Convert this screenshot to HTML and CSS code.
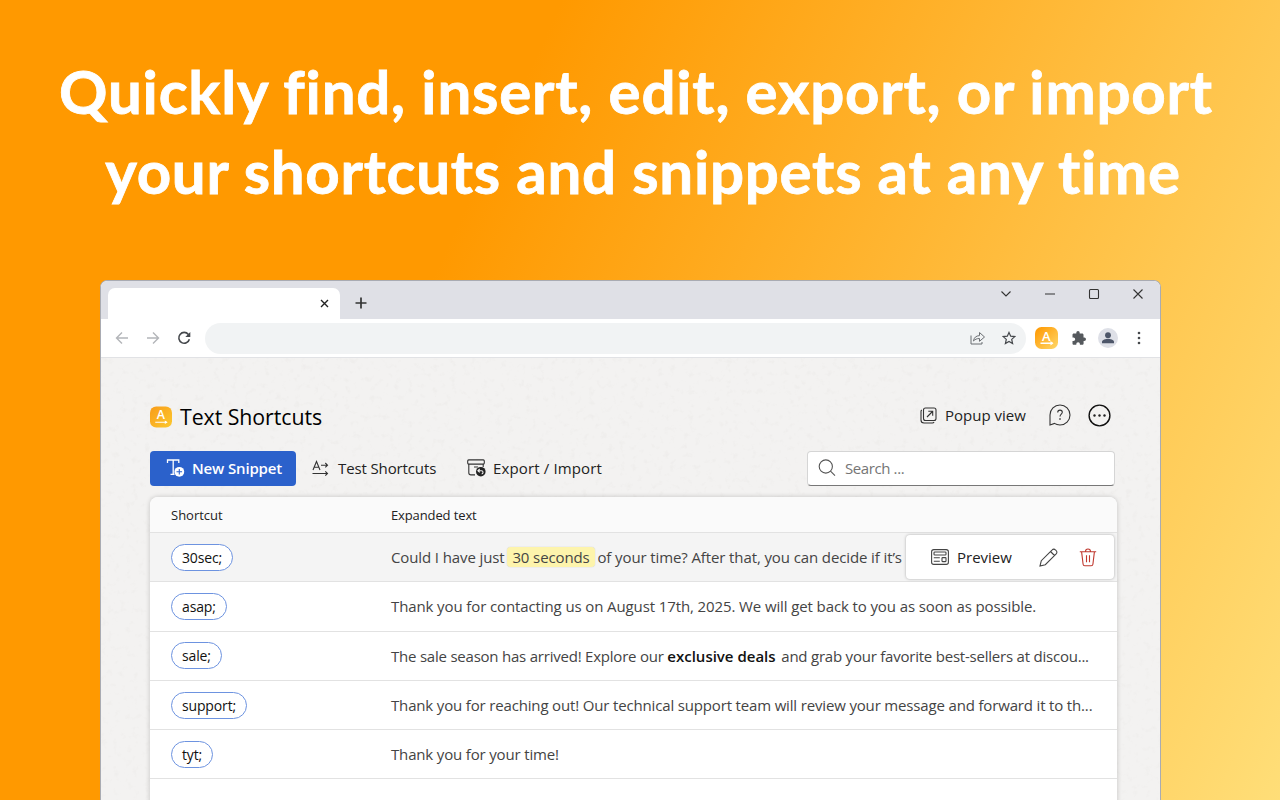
FILE: index.html
```
<!DOCTYPE html>
<html lang="en">
<head>
<meta charset="utf-8">
<title>Text Shortcuts</title>
<link rel="stylesheet" href="styles.css">
</head>
<body>

    <h1 class="headline">
        <span class="line1">Quickly find, insert, edit, export, or import</span>
        <span class="line2">your shortcuts and snippets at any time</span>
    </h1>

    <div class="window">

        <!-- tabs -->
        <div class="tabstrip">
            <div class="tab">
                <svg width="9" height="9" viewBox="0 0 9 9" stroke="#222" stroke-width="1.4"><path d="M1 1l7 7M8 1l-7 7"/></svg>
            </div>
            <svg class="newtab" width="12" height="12" viewBox="0 0 12 12" stroke="#333" stroke-width="1.7"><path d="M6 .5v11M.5 6h11"/></svg>
            <div class="controls">
                <svg width="12" height="12" viewBox="0 0 12 12"><path d="M1.5 3.5l4.5 4.5 4.5-4.5"/></svg>
                <svg width="12" height="12" viewBox="0 0 12 12"><path d="M1 6h10"/></svg>
                <svg width="12" height="12" viewBox="0 0 12 12"><rect x="1.5" y="1.5" width="9" height="9" rx="1"/></svg>
                <svg width="12" height="12" viewBox="0 0 12 12"><path d="M1.5 1.5l9 9M10.5 1.5l-9 9"/></svg>
            </div>
        </div>

        <div class="navbar">
            <svg class="nav-dim" width="14" height="14" viewBox="0 0 14 14"><path d="M13 7H1.5M7 1.5L1.5 7 7 12.500"/></svg>
            <svg class="nav-dim" width="14" height="14" viewBox="0 0 14 14"><path d="M1 7h11.500M7 1.500L12.500 7 7 12.500"/></svg>
            <svg class="reload" width="14" height="14" viewBox="0 0 14 14"><path d="M11.400 3.400A5.400 5.400 0 1 0 12.400 8.300"/><path d="M13.300.9v5H8.300z" class="fill"/></svg>
            <div class="address">
                <svg class="share" width="16" height="14" viewBox="0 0 16 14"><path d="M1 4.500V13h11v-2M3.500 10C4 6.500 6 4.800 9.500 4.600V1.500l5 4.500-5 4.300V7.500C6.800 7.500 5 8.300 3.500 10z"/></svg>
                <svg class="star" width="14" height="14" viewBox="0 0 14 14"><path d="M7 1.400l1.700 3.800 4.100.4-3.100 2.800.9 4.100L7 10.400l-3.600 2.100.9-4.100L1.200 5.600l4.100-.4z"/></svg>
            </div>
            <svg class="ext" width="23" height="22" viewBox="0 0 23 22">
                <defs><linearGradient id="lg" x1="0" y1="0" x2="1" y2="1"><stop offset=".1" stop-color="#ff9d08"/><stop offset="1" stop-color="#ffd86a"/></linearGradient></defs>
                <rect width="23" height="22" rx="6.500" fill="url(#lg)"/>
                <text x="11.300" y="13.500" text-anchor="middle" class="logo-a">A</text>
                <path d="M5.500 16.300h12" stroke="#fff" stroke-width="1.400"/><path d="M15.500 14.100l3 2.200-3 2.200z" fill="#fff"/>
            </svg>
            <svg class="puzzle" width="14" height="14" viewBox="0 0 14 14"><path d="M12.300 6.500h-.8V3.900c0-.7-.6-1.300-1.300-1.300H7.700v-.8a1.700 1.700 0 0 0-3.400 0v.8H1.800C1 2.600.5 3.200.5 3.900v2.500h.9a1.800 1.800 0 0 1 0 3.600H.5v2.500c0 .7.500 1.300 1.300 1.300h2.500V13a1.800 1.800 0 0 1 3.600 0v.8h2.400c.7 0 1.300-.6 1.300-1.300V9.900h.7a1.700 1.700 0 0 0 0-3.400z"/></svg>
            <svg class="avatar" width="20" height="20" viewBox="0 0 20 20"><circle cx="10" cy="10" r="10" fill="#dee0e7"/><circle cx="10" cy="7.200" r="2.900"/><path d="M4 15.200v-1.500c0-2 4-3 6-3s6 1 6 3v1.500z"/></svg>
            <svg class="kebab" width="4" height="14" viewBox="0 0 4 14"><circle cx="2" cy="2" r="1.300"/><circle cx="2" cy="7" r="1.300"/><circle cx="2" cy="12" r="1.300"/></svg>
        </div>

        <div class="page">
            <!-- paper grain -->
            <svg class="paper" width="100%" height="100%">
                <filter id="grain" x="0" y="0" width="100%" height="100%">
                    <feTurbulence type="fractalNoise" baseFrequency=".16" numOctaves="3" seed="8"/>
                    <feColorMatrix values="0 0 0 0 .55  0 0 0 0 .52  0 0 0 0 .48  2.400 0 0 0 -1.350"/>
                </filter>
                <rect width="100%" height="100%" filter="url(#grain)"/>
            </svg>

            <div class="header">
                <svg class="logo" width="22" height="22" viewBox="0 0 23 22">
                    <defs><linearGradient id="lg2" x1="0" y1="0" x2="1" y2="1"><stop offset=".1" stop-color="#f9a01b"/><stop offset="1" stop-color="#fcc92f"/></linearGradient></defs>
                    <rect width="23" height="22" rx="6.500" fill="url(#lg2)"/>
                    <text x="11.300" y="13.500" text-anchor="middle" class="logo-a">A</text>
                    <path d="M5.500 16.500h12" stroke="#fff" stroke-width="1.200"/><path d="M15.500 14.600l3 1.900-3 1.900z" fill="#fff"/>
                </svg>
                <span class="title">Text Shortcuts</span>
                <div class="header-right">
                    <svg width="17" height="17" viewBox="0 0 17 17"><rect x="3.500" y="1" width="12.500" height="12.500" rx="2"/><path d="M1.800 3C1.200 3.400 1 4 1 4.600v8.400c0 2 1.200 3 3 3h8.400c.7 0 1.300-.3 1.700-.9M7 10l5.500-5.500M8.300 4.300h4.400v4.400"/></svg>
                    <span class="popup">Popup view</span>
                    <svg class="help" width="22" height="22" viewBox="0 0 22 22"><path d="M1 21V11A10 10 0 1 1 11 21c-2 0-4-.5-5.500-1.600z"/><path d="M8.700 8.500c0-1.500 1-2.400 2.300-2.400s2.300.9 2.300 2.200c0 1.700-2.300 2-2.300 4.200"/><path d="M11 14.300v1.400" stroke-width="1.500"/></svg>
                    <svg class="more" width="23" height="23" viewBox="0 0 23 23"><circle cx="11.500" cy="11.500" r="10.400"/><g fill="#222" stroke="none"><circle cx="6.500" cy="11.500" r="1.200"/><circle cx="11.500" cy="11.500" r="1.200"/><circle cx="16.500" cy="11.500" r="1.200"/></g></svg>
                </div>
            </div>

            <div class="toolbar">
                <button class="btn-new">
                    <svg width="20" height="20" viewBox="0 0 20 20"><path d="M1.500 5V2h11.300v3M7.200 2v14M4.500 16.300h4" fill="none" stroke="#fff" stroke-width="1.300"/><circle cx="13.300" cy="13.800" r="4.900" fill="#fff"/><path d="M13.300 11v5.600M10.500 13.800h5.600" stroke="#2b61cb" stroke-width="1.100"/></svg>
                    <span>New Snippet</span>
                </button>
                <div class="tool test">
                    <svg width="17" height="17" viewBox="0 0 17 17"><path d="M1 10L4.500 1.500 8 10M2.200 7.200h4.600M9 5.200h6.500M13.300 3l2.200 2.200-2.200 2.200M.5 13.500h15M13.300 11.300l2.200 2.200-2.200 2.200"/></svg>
                    <span>Test Shortcuts</span>
                </div>
                <div class="tool export">
                    <svg width="19" height="18" viewBox="0 0 19 18"><rect x=".7" y=".9" width="16.600" height="4.200" rx="1"/><path d="M1.800 5.100v8.600c0 1.400.8 2.200 2.200 2.200h4M16.200 5.100v3M7 8h4"/><circle cx="13.800" cy="12.700" r="4.800" fill="#222" stroke="none"/><path d="M11.300 11.700h3.200c2 0 2 3 .2 3.200M12.700 10l-1.800 1.700 1.800 1.600" stroke="#f3f2f1"/></svg>
                    <span>Export / Import</span>
                </div>
                <div class="search">
                    <svg width="18" height="18" viewBox="0 0 18 18"><circle cx="7.800" cy="7.500" r="6.600"/><path d="M12.500 12.200l4.500 4.500"/></svg>
                    <span>Search ...</span>
                </div>
            </div>

            <div class="table">
                <div class="row head"><span>Shortcut</span><span class="h2">Expanded text</span></div>
                <div class="row active">
                    <div><span class="pill">30sec;</span></div>
                    <div class="text">Could I have just <mark>30 seconds</mark> of your time? After that, you can decide if it’s</div>
                    <div class="actions">
                        <svg width="18" height="16" viewBox="0 0 18 16"><rect x=".6" y=".6" width="16.800" height="14.800" rx="2.200"/><rect x="3" y="3" width="12" height="3" rx=".8"/><path d="M2.800 8.700h6M2.800 12.300h6"/><rect x="11" y="8.600" width="4" height="4" rx=".6"/></svg>
                        <span class="preview">Preview</span>
                        <svg class="pen" width="19" height="19" viewBox="0 0 19 19"><path d="M1 18l1.300-5.300L13.200 1.800a2.200 2.200 0 0 1 3.200 0l.8.800a2.200 2.200 0 0 1 0 3.200L6.300 16.700zM11.500 3.500l4 4"/></svg>
                        <svg class="trash" width="18" height="19" viewBox="0 0 18 19"><path d="M.8 3.700h16.400M6.500 3.500C6.500 2 7.500 1 9 1s2.500 1 2.500 2.500M2.600 3.900l1.500 12.300c.1 1 .8 1.600 1.700 1.600h6.400c.9 0 1.600-.6 1.700-1.600l1.500-12.300M7.500 7.200v7M10.500 7.200v7"/></svg>
                    </div>
                </div>
                <div class="row">
                    <div><span class="pill">asap;</span></div>
                    <div class="text">Thank you for contacting us on August 17th, 2025. We will get back to you as soon as possible.</div>
                </div>
                <div class="row">
                    <div><span class="pill">sale;</span></div>
                    <div class="text deals">The sale season has arrived! Explore our <b>exclusive deals</b> and grab your favorite best-sellers at discou...</div>
                </div>
                <div class="row">
                    <div><span class="pill">support;</span></div>
                    <div class="text tight">Thank you for reaching out! Our technical support team will review your message and forward it to th...</div>
                </div>
                <div class="row">
                    <div><span class="pill">tyt;</span></div>
                    <div class="text tight">Thank you for your time!</div>
                </div>
            </div>
        </div>
    </div>

</body>
</html>
```
FILE: styles.css
```
* {
    box-sizing: border-box;
}

body {
    margin: 0;
    height: 800px;
    overflow: hidden;
    display: flex;
    flex-direction: column;
    background: linear-gradient(115deg, #ff9900 34%, #ffde78 100%);
    font-family: "Open Sans", "Noto Sans", sans-serif;
    font-size: 15px;
    color: #222;
}

svg {
    flex: none;
    display: block;
}

.headline {
    margin: 0;
    padding: 51px 8px 0 0;
    height: 280px;
    font: bold 60px/80px Lato, sans-serif;
    color: #fff;
    -webkit-text-stroke: 0.8px #fff;
    text-align: center;
    white-space: nowrap;
}

.headline span {
    display: block;
}

.line1 {
    letter-spacing: 0.8px;
}

.line2 {
    letter-spacing: 0.75px;
    padding-left: 14px;
}

/* browser window */
.window {
    width: 1061px;
    height: 520px;
    margin-left: 100px;
    border: 1px solid #a9abb2;
    border-bottom: none;
    border-radius: 7px 7px 0 0;
    background: #fff;
    overflow: hidden;
    display: flex;
    flex-direction: column;
}

.tabstrip {
    flex: none;
    height: 38px;
    padding-left: 7px;
    background: #dfe0e6;
    display: flex;
}

.tab {
    width: 232px;
    height: 31px;
    margin-top: 7px;
    padding-right: 11px;
    border-radius: 7px 7px 0 0;
    background: #fff;
    display: flex;
    align-items: center;
    justify-content: flex-end;
}

.newtab {
    margin: 16px 0 0 15px;
}

.controls {
    margin: 7px 16px 0 auto;
    display: flex;
    gap: 32px;
}

.controls svg {
    fill: none;
    stroke: #333;
    stroke-width: 1.1;
}

.navbar {
    flex: none;
    height: 39px;
    padding-left: 14px;
    border-bottom: 1px solid #e1e2e5;
    display: flex;
    align-items: center;
    fill: none;
    stroke: #45484c;
    stroke-width: 1.2;
}

.nav-dim {
    stroke: #b3b5b9;
    stroke-width: 1.4;
    margin-right: 17px;
}

.reload {
    stroke-width: 1.6;
}

.fill {
    fill: #45484c;
    stroke: none;
}

.address {
    width: 821px;
    height: 31px;
    margin-left: 14px;
    padding-right: 10px;
    border-radius: 16px;
    background: #f1f3f4;
    display: flex;
    align-items: center;
    justify-content: flex-end;
    gap: 16px;
}

.share {
    stroke: #6b6e72;
    stroke-width: 1;
}

.ext {
    margin-left: 9px;
    stroke: none;
}

.logo-a {
    font: 600 13px "Open Sans", sans-serif;
    fill: #fff;
    stroke: none;
}

.puzzle {
    margin-left: 14px;
    fill: #55595d;
    stroke: none;
}

.avatar {
    margin-left: 12px;
    fill: #4d5669;
    stroke: none;
}

.kebab {
    margin-left: 19px;
    fill: #45484c;
    stroke: none;
}

/* extension page */
.page {
    position: relative;
    flex: 1;
    min-height: 0;
    padding: 40px 43px 0 49px;
    background: #f3f2f1;
}

.paper {
    position: absolute;
    left: 0;
    top: 0;
    opacity: 0.1;
}

.header,
.toolbar,
.table {
    position: relative;
    display: flex;
}

.header {
    height: 36px;
    align-items: center;
}

.logo {
    margin-top: 1px;
}

.title {
    margin-left: 8px;
    font-size: 21.3px;
    letter-spacing: -0.05px;
    color: #000;
}

.header-right {
    margin: 0 6px 2px auto;
    display: flex;
    align-items: center;
    fill: none;
    stroke: #333;
    stroke-width: 1.1;
}

.popup {
    width: 82px;
    margin: 0 22px 0 8px;
    white-space: nowrap;
}

.more {
    margin-left: 17px;
    stroke: #111;
    stroke-width: 1.4;
}

.toolbar {
    height: 36px;
    margin-top: 16px;
    align-items: center;
}

.btn-new {
    width: 146px;
    height: 35px;
    padding: 0 0 0 16px;
    border: none;
    border-radius: 4px;
    background: #2b61cb;
    color: #fff;
    font: 600 15px "Open Sans", sans-serif;
    letter-spacing: -0.15px;
    white-space: nowrap;
    display: flex;
    align-items: center;
    gap: 6px;
}

.tool {
    display: flex;
    align-items: center;
    white-space: nowrap;
    fill: none;
    stroke: #333;
    stroke-width: 1.1;
}

.test {
    width: 155px;
    margin-left: 16px;
    gap: 9px;
    letter-spacing: -0.12px;
}

.export {
    gap: 7px;
    letter-spacing: 0.14px;
}

.search {
    width: 308px;
    height: 35px;
    margin: 0 2px 0 auto;
    padding-left: 10px;
    border: 1px solid #d5d5d5;
    border-bottom-color: #777;
    border-radius: 4px;
    background: #fff;
    color: #757575;
    display: flex;
    align-items: center;
    gap: 9px;
    letter-spacing: -0.4px;
    fill: none;
    stroke: #555;
    stroke-width: 1.1;
}

/* snippets table */
.table {
    width: 967px;
    height: 320px;
    margin-top: 11px;
    flex-direction: column;
    border-radius: 8px 8px 0 0;
    background: #fff;
    box-shadow: 0 0 5px rgba(0, 0, 0, 0.2);
}

.row {
    position: relative;
    flex: none;
    height: 49.3px;
    padding-left: 21px;
    border-bottom: 1px solid #e2e2e2;
    display: grid;
    grid-template-columns: 220px 1fr;
    align-items: center;
}

.head {
    height: 36px;
    border-radius: 8px 8px 0 0;
    background: #fafafa;
    font-size: 13px;
}

.h2 {
    letter-spacing: -0.12px;
}

.active {
    background: #f4f4f4;
}

.pill {
    display: inline-block;
    height: 27px;
    padding: 0 10px;
    border: 1px solid #6d93e0;
    border-radius: 14px;
    background: #fff;
    font-size: 14px;
    line-height: 25px;
    letter-spacing: -0.15px;
    color: #111;
    vertical-align: middle;
}

.text {
    color: #444;
    letter-spacing: -0.11px;
    white-space: nowrap;
}

.text b {
    font-weight: 600;
    letter-spacing: 0;
    color: #111;
    margin-right: 2px;
}

mark {
    padding: 0 5px;
    margin: 0 -1px;
    border-radius: 4px;
    background: #fdf4ac;
    color: #444;
    box-shadow: 0 0 1px rgba(0, 0, 0, 0.3);
}

.tight {
    letter-spacing: -0.16px;
}

.deals {
    letter-spacing: -0.22px;
}

.actions {
    position: absolute;
    left: 756px;
    top: 2px;
    width: 208px;
    height: 44px;
    padding-left: 25px;
    border-radius: 4px;
    background: #fff;
    box-shadow: 0 0 3px rgba(0, 0, 0, 0.3);
    display: flex;
    align-items: center;
    fill: none;
    stroke: #444;
    stroke-width: 1.1;
}

.preview {
    width: 55px;
    margin: 0 27px 0 8px;
    font-weight: 500;
}

.trash {
    margin-left: 21px;
    stroke: #c0392f;
}
```
